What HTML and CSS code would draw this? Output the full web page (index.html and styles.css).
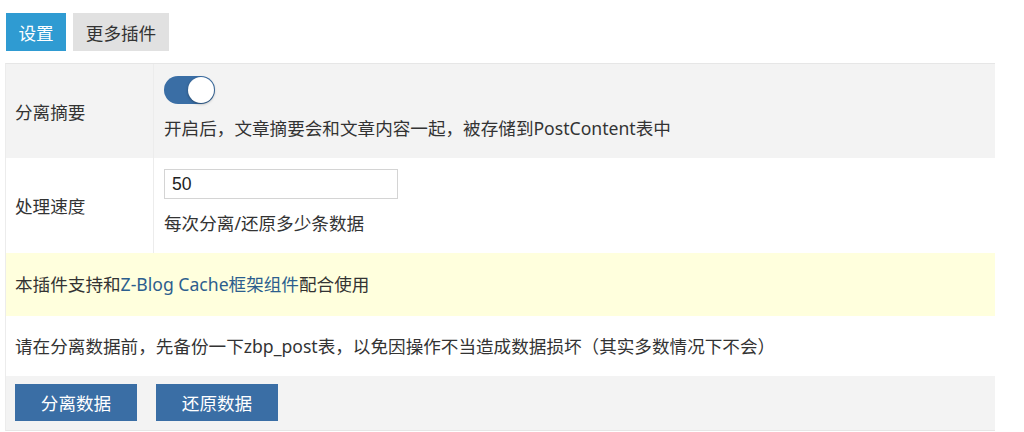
FILE: index.html
```html
<!DOCTYPE html>
<html lang="zh-CN">
<head>
<meta charset="utf-8">
<title>设置</title>
<link rel="stylesheet" href="styles.css">
</head>
<body>
<div class="page">
  <div class="tabs">
    <span class="tab tab-active">设置</span>
    <span class="tab">更多插件</span>
  </div>
  <div class="table">
    <div class="row row-gray row-1">
      <div class="label">分离摘要</div>
      <div class="content content-toggle">
        <span class="toggle"><span class="knob"></span></span>
        <p class="desc">开启后，文章摘要会和文章内容一起，被存储到PostContent表中</p>
      </div>
    </div>
    <div class="row row-2">
      <div class="label">处理速度</div>
      <div class="content content-input">
        <input class="field" type="text" value="50">
        <p class="desc">每次分离/还原多少条数据</p>
      </div>
    </div>
    <div class="row row-yellow row-3">
      <div class="full">本插件支持和<a class="link" href="#">Z-Blog Cache框架组件</a>配合使用</div>
    </div>
    <div class="row row-4">
      <div class="full">请在分离数据前，先备份一下zbp_post表，以免因操作不当造成数据损坏（其实多数情况下不会）</div>
    </div>
    <div class="row row-gray row-actions">
      <button class="btn">分离数据</button>
      <button class="btn">还原数据</button>
    </div>
  </div>
</div>
</body>
</html>
```

FILE: styles.css
```css
* { box-sizing: border-box; }
html, body { margin: 0; padding: 0; background: #fff; }
body {
  font-family: "Noto Sans", "Noto Sans CJK SC", sans-serif;
  font-size: 17.6px;
  color: #333;
}
.page { padding: 13px 29px 0 5px; }
.tabs { display: flex; gap: 7px; padding-left: 1px; }
.tab {
  display: flex; align-items: center; justify-content: center;
  height: 38px; width: 96px;
  background: #e1e1e1; color: #333;
  font-size: 17.6px;
}
.tab-active { background: #2f9bd2; color: #fff; width: 60px; }
.table {
  margin-top: 12px;
  width: 990px;
  border-top: 1px solid #e6e6e6;
  border-left: 1px solid #ececec;
  border-bottom: 1px solid #e6e6e6;
}
.row { display: flex; align-items: stretch; }
.row-gray { background: #f3f3f3; }
.row-yellow { background: #ffffdd; }
.row-1 { height: 94px; }
.row-2 { height: 95px; }
.row-3 { height: 63px; }
.row-4 { height: 60px; }
.label {
  width: 148px; flex: none;
  display: flex; align-items: center;
  padding-left: 9px;
  border-right: 1px solid #ececec;
}
.content { flex: 1; padding-left: 10px; }
.content-toggle { padding-top: 12px; }
.content-input { padding-top: 11px; }
.desc { margin: 12px 0 0; line-height: 25px; }
.toggle {
  display: block; position: relative;
  width: 51px; height: 28px; border-radius: 14px;
  background: #3a6ea5;
}
.knob {
  position: absolute; top: 1px; right: 1px;
  width: 26px; height: 26px; border-radius: 50%;
  background: #fff;
  box-shadow: 0 1px 3px rgba(0,0,0,0.35);
}
.field {
  display: block;
  width: 234px; height: 30px;
  border: 1px solid #d4d4d4;
  padding: 0 7px;
  font-family: "Liberation Sans", Arial, sans-serif;
  font-size: 17.6px; color: #222;
  background: #fff;
}
.full {
  display: flex; align-items: center;
  padding: 0 9px; line-height: 25px;
}
.link { color: #2c5e8e; text-decoration: none; }
.row-actions { height: 54px; gap: 19px; padding: 8px 9px 0; }
.btn {
  width: 122px; height: 37px;
  border: none; border-radius: 0;
  background: #3a6ea5; color: #fff;
  font-family: "Noto Sans CJK SC", sans-serif;
  font-size: 17.6px; padding: 0;
}
```
